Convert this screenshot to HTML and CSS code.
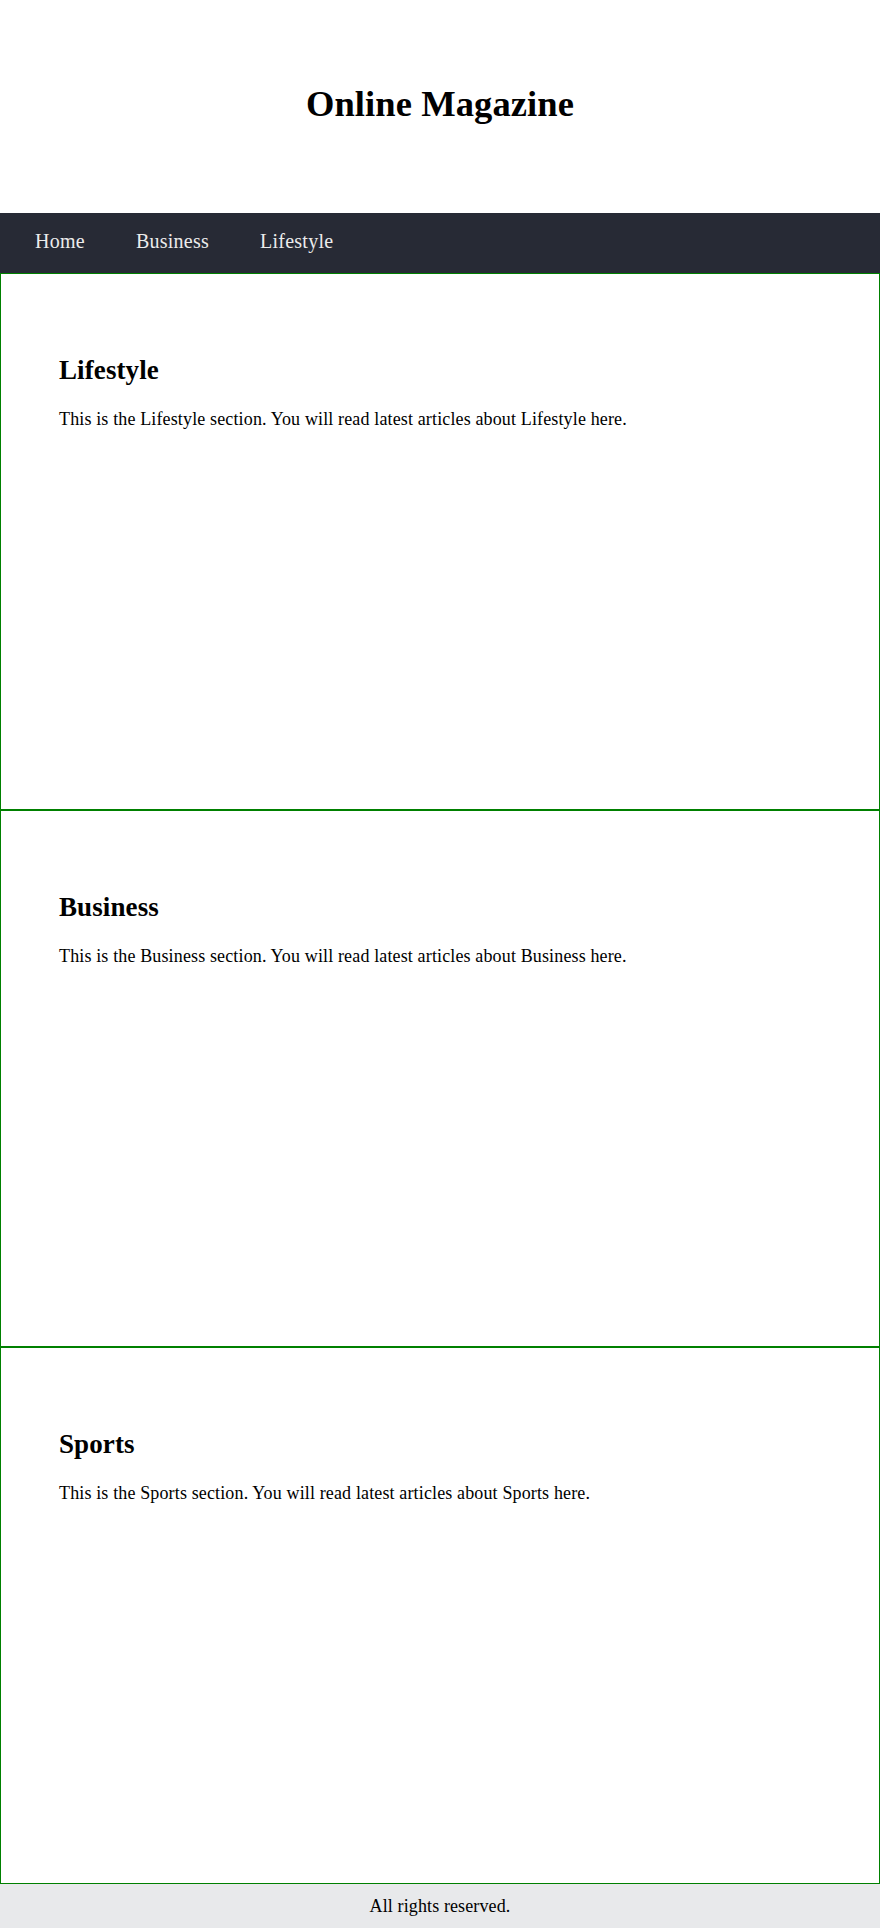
FILE: index.html
```html
<!DOCTYPE html>
<html lang="en">
<head>
<meta charset="utf-8">
<title>Online Magazine</title>
<link rel="stylesheet" href="styles.css">
</head>
<body>
<header class="site-header">
  <h1 class="site-title">Online Magazine</h1>
</header>
<nav class="main-nav">
  <a class="nav-link" href="#home">Home</a>
  <a class="nav-link" href="#business">Business</a>
  <a class="nav-link" href="#lifestyle">Lifestyle</a>
</nav>
<main>
  <section class="topic" id="lifestyle">
    <h2 class="topic-title">Lifestyle</h2>
    <p class="topic-text">This is the Lifestyle section. You will read latest articles about Lifestyle here.</p>
  </section>
  <section class="topic" id="business">
    <h2 class="topic-title">Business</h2>
    <p class="topic-text">This is the Business section. You will read latest articles about Business here.</p>
  </section>
  <section class="topic" id="sports">
    <h2 class="topic-title">Sports</h2>
    <p class="topic-text">This is the Sports section. You will read latest articles about Sports here.</p>
  </section>
</main>
<footer class="site-footer">All rights reserved.</footer>
</body>
</html>
```

FILE: styles.css
```css
* {
  box-sizing: border-box;
}

html, body {
  margin: 0;
  padding: 0;
}

body {
  font-family: "Liberation Serif", "Times New Roman", serif;
  font-size: 18px;
  color: #000;
  background: #fff;
}

.site-header {
  padding: 84px 0 89px;
  text-align: center;
}

.site-title {
  margin: 0;
  font-size: 36.5px;
  line-height: 40px;
  font-weight: bold;
  letter-spacing: 0.1px;
}

.main-nav {
  height: 60px;
  background: #272a35;
  display: flex;
  gap: 51px;
  padding: 17px 0 0 35px;
}

.nav-link {
  color: #ececec;
  text-decoration: none;
  font-size: 20px;
  line-height: 22px;
  letter-spacing: 0.25px;
}

.topic {
  height: 537px;
  border: 1px solid #008000;
  padding: 81px 58px 0;
}

.topic-title {
  margin: 0;
  font-size: 27px;
  line-height: 30px;
  font-weight: bold;
  letter-spacing: 0.1px;
}

.topic-text {
  margin: 24px 0 0;
  font-size: 18px;
  line-height: 20px;
  letter-spacing: 0.14px;
}

.site-footer {
  background: #e8e9eb;
  text-align: center;
  padding: 12px 0;
  line-height: 20px;
  font-size: 18px;
  letter-spacing: 0.12px;
}
```
